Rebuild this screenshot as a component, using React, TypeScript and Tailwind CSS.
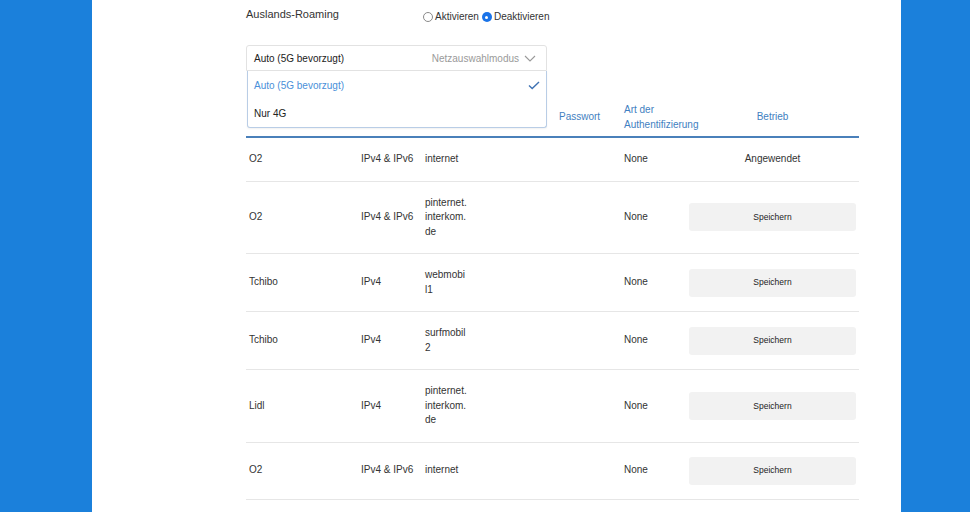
import React from "react";

type Row = { name: string; ip: string; apn: string[]; op: "applied" | "save" };

const rows: Row[] = [
  { name: "O2", ip: "IPv4 & IPv6", apn: ["internet"], op: "applied" },
  { name: "O2", ip: "IPv4 & IPv6", apn: ["pinternet.", "interkom.", "de"], op: "save" },
  { name: "Tchibo", ip: "IPv4", apn: ["webmobi", "l1"], op: "save" },
  { name: "Tchibo", ip: "IPv4", apn: ["surfmobil", "2"], op: "save" },
  { name: "Lidl", ip: "IPv4", apn: ["pinternet.", "interkom.", "de"], op: "save" },
  { name: "O2", ip: "IPv4 & IPv6", apn: ["internet"], op: "save" },
];

export default function App() {
  return (
    <div className="flex h-[512px] w-[970px] overflow-hidden font-['Liberation_Sans',Arial,sans-serif] text-[#333]">
      <div className="w-[92px] shrink-0 bg-[#1b80db]" />
      <div className="flex-1 bg-white pl-[154px]">
        <div className="w-[613px]">
          {/* Roaming row */}
          <div className="flex items-start">
            <div className="w-[177px] pt-[6px] text-[11px] leading-[16px] text-[#333]">Auslands-Roaming</div>
            <div className="mt-[9px] flex items-center text-[10px] leading-[16px]">
              <span className="mr-[2px] inline-block h-[10px] w-[10px] rounded-full border border-[#8a8a8a] bg-white" />
              <span className="mr-[3px]">Aktivieren</span>
              <span className="mr-[2px] flex h-[10px] w-[10px] items-center justify-center rounded-full bg-[#1a73e8]">
                <span className="h-[3px] w-[3px] rounded-full bg-white" />
              </span>
              <span>Deaktivieren</span>
            </div>
          </div>

          {/* Select */}
          <div className="relative z-10 mt-[20px] w-[301px]">
            <div className="flex h-[26px] items-center justify-between rounded-t-[3px] border border-[#e2e2e2] bg-white pl-[7px] pr-[10px] text-[10px]">
              <span className="text-[#222]">Auto (5G bevorzugt)</span>
              <span className="flex items-center gap-[5px] text-[#9a9a9a]">
                Netzauswahlmodus
                <svg width="12" height="7" viewBox="0 0 12 7" fill="none">
                  <polyline points="1,1 6,6 11,1" stroke="#9a9a9a" strokeWidth="1.1" />
                </svg>
              </span>
            </div>
            <div className="absolute left-[1px] top-[26px] h-[57px] w-[300px] rounded-b-[3px] border border-t-0 border-[#b9cde6] bg-white text-[10px] shadow-[0_1px_2px_rgba(0,0,0,0.06)]">
              <div className="flex h-[29px] items-center justify-between pl-[6px] pr-[6px]">
                <span className="text-[#4a8fd9]">Auto (5G bevorzugt)</span>
                <svg width="12" height="9" viewBox="0 0 12 9" fill="none">
                  <polyline points="1,4.5 4.2,7.6 11,1" stroke="#3f72b3" strokeWidth="1.4" />
                </svg>
              </div>
              <div className="flex h-[27px] items-center pl-[6px] text-[#222]">Nur 4G</div>
            </div>
          </div>

          {/* Header */}
          <div className="mt-[24px] flex border-b-2 border-[#4a80ba] pb-[4px] pt-[8px] text-[10px] leading-[14.5px] text-[#3f7fc1]">
            <div className="w-[112px]" />
            <div className="w-[64px]" />
            <div className="w-[67px]" />
            <div className="w-[67px]" />
            <div className="flex w-[65px] items-center pl-[3px]">Passwort</div>
            <div className="flex w-[65px] flex-col justify-center pl-[3px]">
              <span>Art der</span>
              <span className="whitespace-nowrap">Authentifizierung</span>
            </div>
            <div className="flex flex-1 items-center justify-center">Betrieb</div>
          </div>

          {/* Rows */}
          {rows.map((r, i) => (
            <div key={i} className="flex border-b border-[#e6e6e6] py-[14px] text-[10px] leading-[14.5px] text-[#333]">
              <div className="flex w-[112px] items-center pl-[3px]">{r.name}</div>
              <div className="flex w-[64px] items-center pl-[3px]">{r.ip}</div>
              <div className="flex w-[67px] flex-col justify-center pl-[3px]">
                {r.apn.map((l, j) => (
                  <span key={j}>{l}</span>
                ))}
              </div>
              <div className="w-[67px]" />
              <div className="w-[65px]" />
              <div className="flex w-[65px] items-center pl-[3px]">None</div>
              <div className="flex flex-1 items-center justify-center px-[3px]">
                {r.op === "applied" ? (
                  <span>Angewendet</span>
                ) : (
                  <button className="flex h-[28px] w-full items-center justify-center rounded-[3px] bg-[#f2f2f2] text-[8.5px] text-[#222]">
                    Speichern
                  </button>
                )}
              </div>
            </div>
          ))}
        </div>
      </div>
      <div className="w-[69px] shrink-0 bg-[#1b80db]" />
    </div>
  );
}
